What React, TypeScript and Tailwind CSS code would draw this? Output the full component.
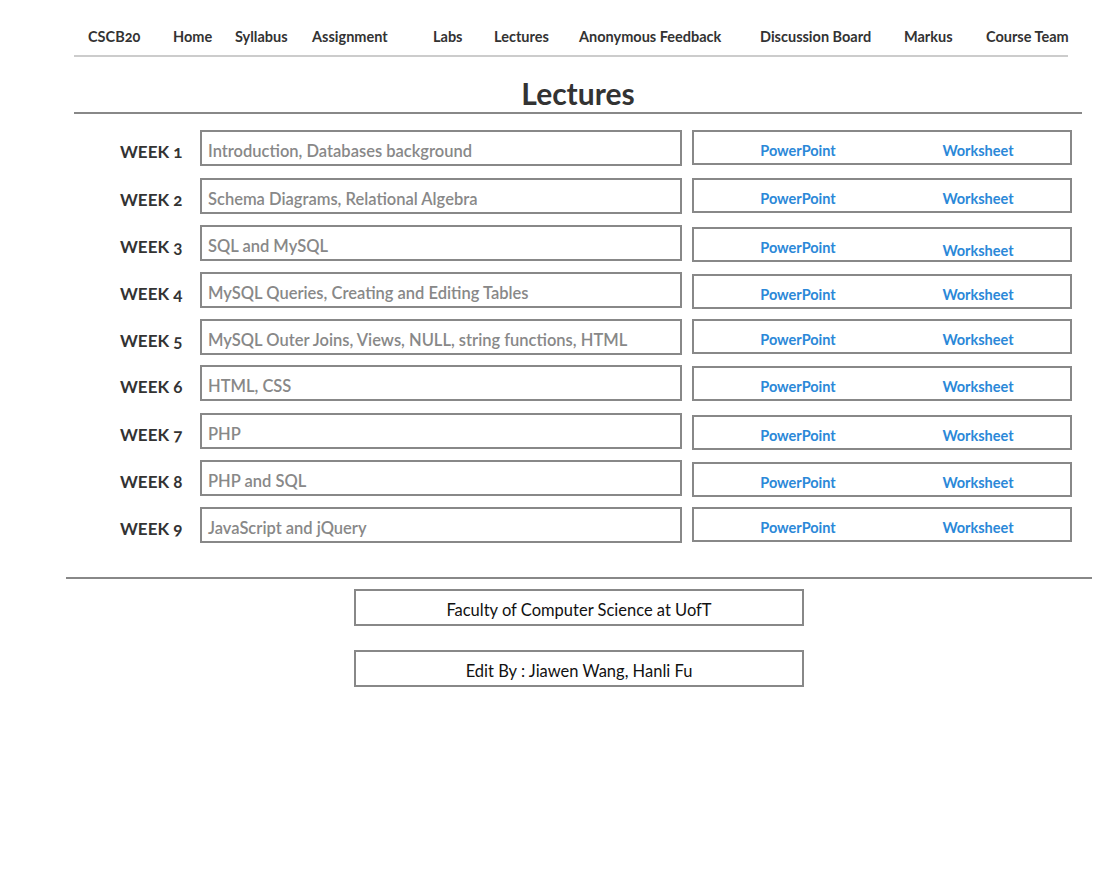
import React from 'react';

const NAV = [
  { label: 'CSCB20', w: 'w-[85px]' },
  { label: 'Home', w: 'w-[62px]' },
  { label: 'Syllabus', w: 'w-[77px]' },
  { label: 'Assignment', w: 'w-[121px]' },
  { label: 'Labs', w: 'w-[61px]' },
  { label: 'Lectures', w: 'w-[85px]' },
  { label: 'Anonymous Feedback', w: 'w-[181px]' },
  { label: 'Discussion Board', w: 'w-[144px]' },
  { label: 'Markus', w: 'w-[82px]' },
  { label: 'Course Team', w: 'w-auto' },
];

// gap = space above the row, shift = how far the link box sits below the topic box
const WEEKS = [
  { n: 1, topic: 'Introduction, Databases background', gap: 'mt-0', shift: 'mt-0' },
  { n: 2, topic: 'Schema Diagrams, Relational Algebra', gap: 'mt-[12px]', shift: 'mt-0' },
  { n: 3, topic: 'SQL and MySQL', gap: 'mt-[11px]', shift: 'mt-[2px]', low: true },
  { n: 4, topic: 'MySQL Queries, Creating and Editing Tables', gap: 'mt-[11px]', shift: 'mt-[2px]' },
  { n: 5, topic: 'MySQL Outer Joins, Views, NULL, string functions, HTML', gap: 'mt-[11px]', shift: 'mt-0' },
  { n: 6, topic: 'HTML, CSS', gap: 'mt-[10px]', shift: 'mt-[1px]' },
  { n: 7, topic: 'PHP', gap: 'mt-[12px]', shift: 'mt-[2px]' },
  { n: 8, topic: 'PHP and SQL', gap: 'mt-[11px]', shift: 'mt-[2px]' },
  { n: 9, topic: 'JavaScript and jQuery', gap: 'mt-[11px]', shift: 'mt-0' },
];

const WeekRow = ({ n, topic, gap, shift, low }: { n: number; topic: string; gap: string; shift: string; low?: boolean }) => (
  <div className={`${gap} flex items-start h-[36px]`}>
    <div className="w-[126px] pl-[46px] pt-[9px] text-[17px] font-bold text-[#333] oldstyle-nums whitespace-nowrap">
      WEEK {n}
    </div>
    <div className="w-[482px] h-[36px] border-2 border-[#888] pl-[6px] pt-[7px] text-[16.5px] font-semibold text-[#888] whitespace-nowrap">
      {topic}
    </div>
    <div className={`${shift} ml-[10px] w-[380px] h-[35px] border-2 border-[#888] flex items-start pl-[38px] pt-[10px] text-[14.5px] font-bold text-[#2b88d8]`}>
      <a className="w-[132px] text-center leading-[17px]">PowerPoint</a>
      <a className={`ml-[48px] w-[132px] text-center leading-[17px] ${low ? 'mt-[3px]' : ''}`}>Worksheet</a>
    </div>
  </div>
);

export default function App() {
  return (
    <div className="w-[1112px] min-h-[882px] bg-white font-['Lato',sans-serif] oldstyle-nums">
      <nav className="ml-[74px] w-[994px] h-[57px] border-b-2 border-[#ccc] flex items-center pl-[14px] pt-[18px] text-[14.5px] font-bold text-[#333]">
        {NAV.map(item => (
          <a key={item.label} className={`${item.w} shrink-0 whitespace-nowrap`}>{item.label}</a>
        ))}
      </nav>

      <h1 className="ml-[74px] w-[1008px] h-[57px] pt-[18px] border-b-2 border-[#888] text-center text-[30px] leading-[36px] font-bold text-[#333]">
        Lectures
      </h1>

      <div className="ml-[74px] mt-[16px] flex flex-col">
        {WEEKS.map(w => (
          <WeekRow key={w.n} {...w} />
        ))}
      </div>

      <footer className="mt-[34px] ml-[66px] w-[1026px] border-t-2 border-[#888]">
        <div className="ml-[288px] mt-[10px] w-[450px] flex flex-col gap-[24px]">
          <div className="h-[37px] border-2 border-[#888] flex items-center justify-center pt-[5px] text-[16.5px] text-[#111]">
            Faculty of Computer Science at UofT
          </div>
          <div className="h-[37px] border-2 border-[#888] flex items-center justify-center pt-[5px] text-[16.5px] text-[#111]">
            Edit By : Jiawen Wang, Hanli Fu
          </div>
        </div>
      </footer>
    </div>
  );
}
